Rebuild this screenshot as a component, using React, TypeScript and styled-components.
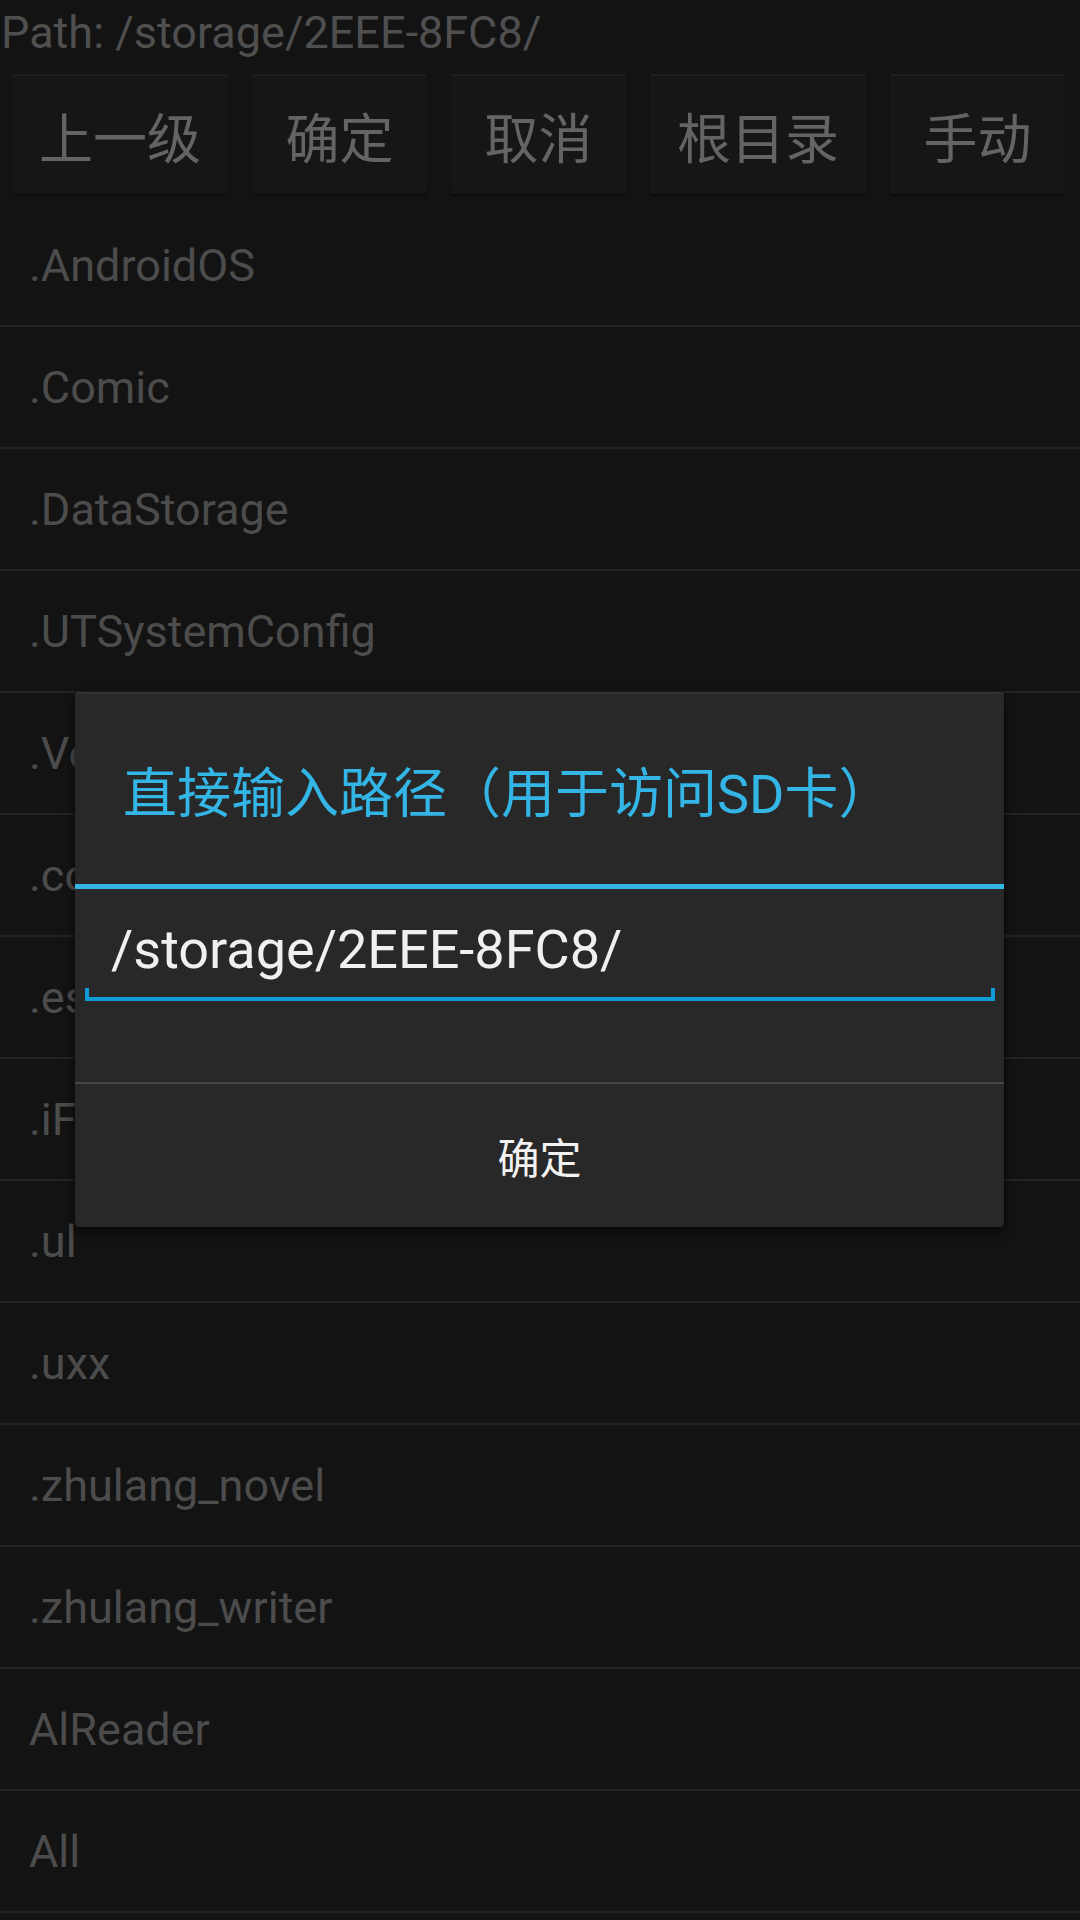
import React from 'react';
import styled, { createGlobalStyle } from 'styled-components';

const GlobalStyle = createGlobalStyle`
    html, body {
        margin: 0;
        padding: 0;
        background: #131313;
    }

    body {
        font-family: Roboto, 'Noto Sans CJK SC', sans-serif;
    }
`

    // Page behind the dialog (already dimmed)
const Screen = styled.div`
    position: relative;
    width: 1080px;
    height: 1920px;
    overflow: hidden;
    background: #131313;
`

const PathLabel = styled.div`
    height: 66px;
    line-height: 66px;
    font-size: 45px;
    color: #4f4f4f;
    padding-left: 1px;
    white-space: nowrap;
`

const ToolBar = styled.div`
    display: flex;
    gap: 24px;
    padding: 8px 13px 11px 12px;
`

const ToolButton = styled.div`
    min-width: 175px;
    height: 120px;
    box-sizing: border-box;
    padding: 0 27px;
    display: flex;
    align-items: center;
    justify-content: center;
    font-size: 54px;
    color: #646464;
    background: #151618;
    border-top: 2px solid #1e1f22;
    border-radius: 4px;
    box-shadow: 0 2px 1px #0c0c0c;
    white-space: nowrap;
`

const FileList = styled.div`
    display: flex;
    flex-direction: column;
`

const FileRow = styled.div`
    height: 120px;
    flex-shrink: 0;
    display: flex;
    align-items: center;
    padding-left: 29px;
    font-size: 45px;
    color: #4c4c4c;
    border-bottom: 2px solid #232323;
    white-space: nowrap;
`

    // Dialog
const Dialog = styled.div`
    position: absolute;
    left: 75px;
    top: 692px;
    width: 929px;
    background: #282828;
    border-radius: 4px;
    box-shadow: 0 6px 12px rgba(0, 0, 0, 0.55), 0 0 2px rgba(0, 0, 0, 0.6);
    border-top: 2px solid #343434;
    box-sizing: border-box;
    overflow: hidden;
`

const DialogTitle = styled.div`
    height: 190px;
    display: flex;
    align-items: center;
    padding-left: 48px;
    font-size: 54px;
    color: #33b5e5;
    border-bottom: 5px solid #33b5e5;
    white-space: nowrap;
`

const PathField = styled.div`
    margin: 0 9px 81px 10px;
    padding: 29px 0 20px 26px;
    font-size: 54px;
    line-height: 63px;
    color: #f0f0f0;
    background:
        linear-gradient(#0e9bd8, #0e9bd8) left bottom / 4px 13px no-repeat,
        linear-gradient(#0e9bd8, #0e9bd8) right bottom / 4px 13px no-repeat,
        linear-gradient(#0e9bd8, #0e9bd8) left bottom / 100% 4px no-repeat;
`

const DialogActions = styled.div`
    height: 143px;
    display: flex;
    align-items: center;
    justify-content: center;
    border-top: 2px solid #464646;
    font-size: 42px;
    color: #f2f2f2;
`

const buttons = ['上一级', '确定', '取消', '根目录', '手动']

const folders = [
    '.AndroidOS',
    '.Comic',
    '.DataStorage',
    '.UTSystemConfig',
    '.VoiceRecorder',
    '.com.taobao.dp',
    '.estrongs',
    '.iFlyIME',
    '.ul',
    '.uxx',
    '.zhulang_novel',
    '.zhulang_writer',
    'AlReader',
    'All',
]

export default function App() {
    return (
        <>
            <GlobalStyle />
            <Screen>
                <PathLabel>Path: /storage/2EEE-8FC8/</PathLabel>
                <ToolBar>
                    {buttons.map((label) => (
                        <ToolButton key={label}>{label}</ToolButton>
                    ))}
                </ToolBar>
                <FileList>
                    {folders.map((name) => (
                        <FileRow key={name}>{name}</FileRow>
                    ))}
                </FileList>

                <Dialog>
                    <DialogTitle>直接输入路径（用于访问SD卡）</DialogTitle>
                    <PathField>/storage/2EEE-8FC8/</PathField>
                    <DialogActions>确定</DialogActions>
                </Dialog>
            </Screen>
        </>
    );
}
